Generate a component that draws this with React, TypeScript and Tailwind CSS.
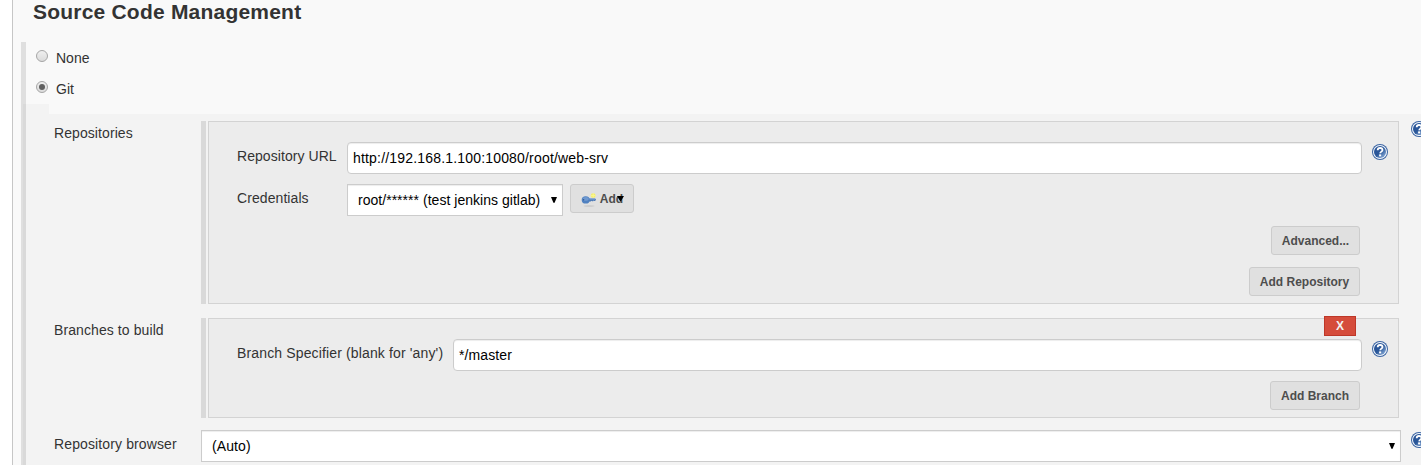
import React from "react";

function HelpIcon() {
  return (
    <svg className="block h-4 w-4 shrink-0" viewBox="0 0 16 16" role="img" aria-label="Help">
      <defs>
        <linearGradient id="help-fill" x1="0" y1="0" x2="1" y2="1">
          <stop offset="0.1" stopColor="#2a5598" />
          <stop offset="0.5" stopColor="#2a5799" />
          <stop offset="0.9" stopColor="#86a9d6" />
        </linearGradient>
      </defs>
      <circle cx="8" cy="8" r="8" fill="#3a64a3" />
      <circle cx="8" cy="8" r="7" fill="#f4f8fc" />
      <circle cx="8" cy="8" r="6" fill="url(#help-fill)" />
      <path d="M5.7 6.3C5.7 4.7 6.7 4 8.1 4c1.5 0 2.4.8 2.4 2 0 1.6-2.3 1.7-2.3 3.3" fill="none" stroke="#fff" strokeWidth="1.8" />
      <rect x="7.1" y="10.4" width="2.1" height="2" fill="#fff" />
    </svg>
  );
}

function KeyIcon() {
  return (
    <svg className="block h-4 w-4 shrink-0" viewBox="0 0 16 16" aria-hidden="true">
      <ellipse cx="8" cy="15" rx="5.5" ry="0.7" fill="#c8c8c8" />
      <circle cx="12.2" cy="4.6" r="2.4" fill="#f5ef66" />
      <path d="M12.2 2v5M9.6 4.6h5.2" stroke="#faf59a" strokeWidth="0.8" />
      <path d="M7 7.4h7.2l.8 1-.8 1.6h-1l-.5-.5-.6.8h-1l-.6-.5-.8.7H7z" fill="#4c7ab8" />
      <path d="M7 8.1h7" stroke="#82a8da" strokeWidth="0.8" />
      <ellipse cx="4.7" cy="8.9" rx="4" ry="3.7" fill="#5081c0" />
      <ellipse cx="4.7" cy="7.9" rx="3" ry="1.8" fill="#6f99d0" />
      <circle cx="2.6" cy="8.8" r="0.7" fill="#2d558e" />
    </svg>
  );
}

function Arrow() {
  return (
    <svg className="block h-[7px] w-[6px] shrink-0" viewBox="0 0 6 7" aria-hidden="true">
      <path d="M0 1h6L3.6 6.8H2.4z" fill="#000" />
    </svg>
  );
}

function MenuArrow() {
  return (
    <svg className="block h-[5px] w-[7px]" viewBox="0 0 7 5" aria-hidden="true">
      <path d="M0 0h7L4 5H3z" fill="#000" />
    </svg>
  );
}

function Radio({ label, checked }: { label: string; checked?: boolean }) {
  return (
    <div className="flex h-[31px] pl-[10px]">
      <svg className="mt-[2px] block h-3 w-3" viewBox="0 0 12 12" aria-hidden="true">
        <defs>
          <linearGradient id="radio-fill" x1="0" y1="0" x2="0" y2="1">
            <stop offset="0" stopColor="#f0f0f0" />
            <stop offset="1" stopColor="#dadada" />
          </linearGradient>
        </defs>
        <circle cx="6" cy="6" r="5.5" fill="url(#radio-fill)" stroke="#a6a6a6" />
        {checked && <circle cx="6" cy="6" r="3" fill="#606060" />}
      </svg>
      <span className="ml-2 leading-5">{label}</span>
    </div>
  );
}

function Button({ children, className }: { children: React.ReactNode; className: string }) {
  return (
    <button
      type="button"
      className={`${className} flex h-[29px] items-center justify-center rounded-[3px] border border-[#cccccc] bg-[#e0e0e0] text-[12px] font-bold whitespace-nowrap text-[#4d4d4d]`}
    >
      {children}
    </button>
  );
}

function Input({ value, className = "" }: { value: string; className?: string }) {
  return (
    <div className={`${className} h-8 flex-1 rounded-[4px] border border-[#cccccc] bg-white pt-[5px] pl-[5px] leading-5 text-black shadow-[inset_0_1px_1px_rgba(0,0,0,0.075)]`}>
      {value}
    </div>
  );
}

function Select({ value, className }: { value: string; className: string }) {
  return (
    <div className={`${className} flex h-8 justify-between border border-[#cccccc] bg-white pt-[5px] pr-[5px] pl-[10px] leading-5 text-black shadow-[inset_0_1px_1px_rgba(0,0,0,0.075)]`}>
      <span>{value}</span>
      <span className="pt-[6px]">
        <Arrow />
      </span>
    </div>
  );
}

function Panel({ children }: { children: React.ReactNode }) {
  return (
    <div className="flex w-[1198px] shrink-0 gap-[2px]">
      <div className="w-[5px] bg-[#d9d9d9]" />
      <div className="relative flex-1 border border-[#d3d3d3] bg-[#ececec] pl-7">{children}</div>
    </div>
  );
}

export default function App() {
  return (
    <div className="flex h-[465px] w-full overflow-hidden bg-white font-['Liberation_Sans',Arial,sans-serif] text-[14px] text-[#333333]">
      <div className="w-[13px] shrink-0 border-r border-[#c6c6c6]" />
      <main className="flex min-w-0 flex-1 flex-col bg-[#f9f9f9] pl-2">
        <h1 className="h-[42px] shrink-0 pl-3 text-[21px] leading-6 font-bold tracking-[0.21px]">Source Code Management</h1>
        <div className="flex min-h-0 flex-1">
          <div className="w-[2px] shrink-0 bg-[#dfdfdf]" />
          <div className="flex min-w-0 flex-1 flex-col">
            <div className="h-[62px] shrink-0 border-l-[3px] border-[#dfdfdf] pt-[6px]">
              <Radio label="None" />
              <Radio label="Git" checked />
            </div>
            <div className="flex-1 border-l-[3px] border-[#d9d9d9] bg-[#f3f3f3]">
              <div className="ml-[23px] h-[10px] bg-[#f9f9f9]" />
              <div className="flex h-[190px] pt-[7px] pl-7">
                <div className="w-[147px] shrink-0 pt-[2px] leading-5 tracking-[0.08px]">Repositories</div>
                <Panel>
                  <div className="flex h-[62px] pt-5">
                    <div className="w-[110px] shrink-0 pt-1 leading-5 tracking-[0.06px]">Repository URL</div>
                    <Input className="tracking-[0.18px]" value="http://192.168.1.100:10080/root/web-srv" />
                    <div className="mr-[10px] ml-[10px] pt-[2px]"><HelpIcon /></div>
                  </div>
                  <div className="flex h-[42px]">
                    <div className="w-[110px] shrink-0 pt-1 leading-5 tracking-[0.08px]">Credentials</div>
                    <Select className="w-[216px] tracking-[0.03px]" value="root/****** (test jenkins gitlab)" />
                    <Button className="relative ml-[7px] w-16">
                      <KeyIcon />
                      <span className="ml-[3px]">Add</span>
                      <span className="absolute top-[11px] left-[46px]"><MenuArrow /></span>
                    </Button>
                  </div>
                  <div className="flex flex-col items-end gap-3 pr-[38px]">
                    <Button className="w-[89px]">Advanced...</Button>
                    <Button className="w-[111px]">Add Repository</Button>
                  </div>
                </Panel>
                <div className="ml-3"><HelpIcon /></div>
              </div>
              <div className="flex h-[114px] pt-[14px] pl-7">
                <div className="w-[147px] shrink-0 pt-[2px] leading-5 tracking-[0.09px]">Branches to build</div>
                <Panel>
                  <button type="button" className="absolute -top-[3px] right-[42px] h-5 w-8 border border-[#bd3728] bg-[#d54c3b] text-center text-[12px] leading-[18px] font-bold text-[#f2f2f2]">X</button>
                  <div className="flex h-[62px] pt-5">
                    <div className="w-[216px] shrink-0 pt-1 leading-5 tracking-[0.14px] whitespace-nowrap">Branch Specifier (blank for 'any')</div>
                    <Input className="tracking-[0.1px]" value="*/master" />
                    <div className="mr-[10px] ml-[10px] pt-[2px]"><HelpIcon /></div>
                  </div>
                  <div className="flex justify-end pr-[38px]">
                    <Button className="w-[90px]">Add Branch</Button>
                  </div>
                </Panel>
              </div>
              <div className="flex h-[47px] pt-3 pl-7">
                <div className="w-[147px] shrink-0 pt-1 leading-5 tracking-[0.12px]">Repository browser</div>
                <Select className="w-[1200px] shrink-0 tracking-[0.1px]" value="(Auto)" />
                <div className="ml-[10px] pt-[2px]"><HelpIcon /></div>
              </div>
            </div>
          </div>
        </div>
      </main>
    </div>
  );
}
